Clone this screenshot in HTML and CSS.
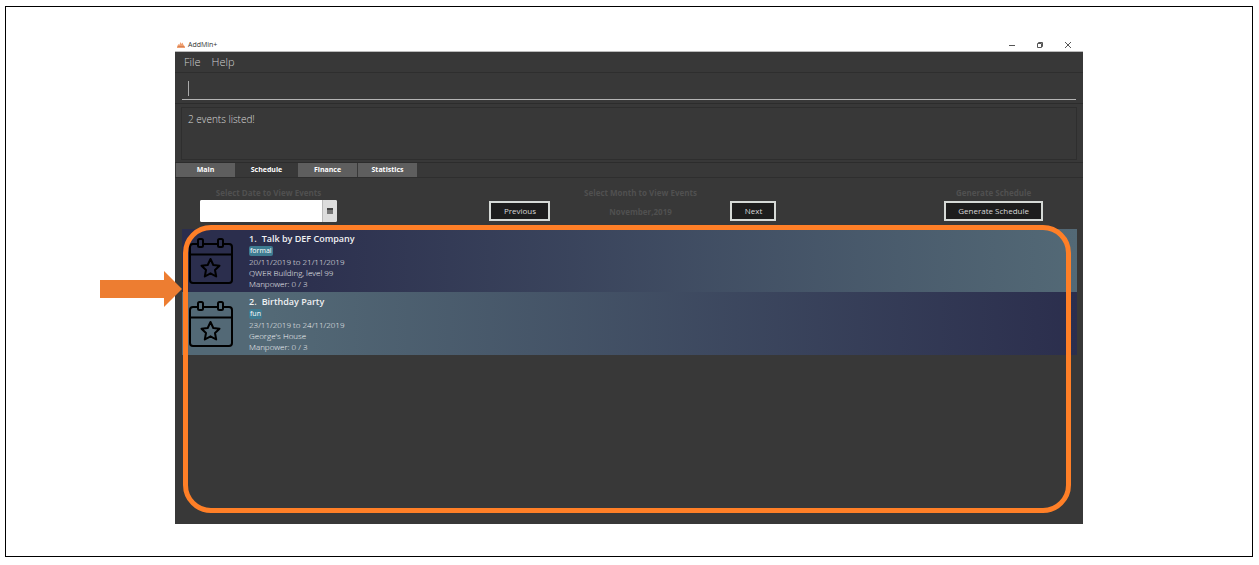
FILE: index.html
```html
<!DOCTYPE html>
<html lang="en">
<head>
<meta charset="utf-8">
<title>AddMin+</title>
<link rel="stylesheet" href="styles.css">
</head>
<body>
<svg class="defs" aria-hidden="true">
  <symbol id="event-icon" viewBox="0 0 44 48">
    <g fill="none" stroke="#000" stroke-width="2" stroke-linejoin="round" stroke-linecap="round">
      <path d="M8 7H4Q1 7 1 10V43Q1 46 4 46H40Q43 46 43 43V10Q43 7 40 7H35M15 7H28M1 17.500H43"/>
      <rect x="9" y="2" width="5" height="8" rx="1.500"/>
      <rect x="29" y="2" width="5" height="8" rx="1.500"/>
      <path d="M21.500 22L24.300 28L30.500 28.700L26 33L27.200 39.500L21.500 36.300L15.800 39.500L17 33L12.500 28.700L18.700 28Z"/>
    </g>
  </symbol>
</svg>
<main class="page">
  <section class="window">
    <header class="titlebar">
      <svg class="logo" viewBox="0 0 8 6" aria-hidden="true"><path d="M0 4.500L1.500 2L2.300 3L3.500 0L4.500 2L5.500 0.500L6.500 3L8 4.500V6H0Z" fill="#f0a070"/><path d="M1 4.500H7" stroke="#c8744a" stroke-width=".7"/></svg>
      <span class="title">AddMin+</span>
      <button class="win-btn" aria-label="Minimize"><svg viewBox="0 0 8 8"><path d="M1 4.500H7"/></svg></button>
      <button class="win-btn" aria-label="Restore"><svg viewBox="0 0 8 8"><path d="M1.500 2.500H5.500V6.500H1.500ZM2.500 2.500V1.500H6.500V5.500H5.500"/></svg></button>
      <button class="win-btn" aria-label="Close"><svg viewBox="0 0 8 8"><path d="M1 1L7 7M7 1L1 7"/></svg></button>
    </header>
    <nav class="menu">
      <button class="menu-item">File</button>
      <button class="menu-item">Help</button>
    </nav>
    <div class="command">
      <input class="command-input" type="text" aria-label="Command">
      <span class="caret"></span>
    </div>
    <div class="result"><p class="result-box">2 events listed!</p></div>
    <nav class="tabs">
      <button class="tab">Main</button>
      <button class="tab tab-active">Schedule</button>
      <button class="tab">Finance</button>
      <button class="tab">Statistics</button>
    </nav>
    <div class="toolbar">
      <div class="group">
        <label class="caption" for="date">Select Date to View Events</label>
        <div class="picker">
          <input class="picker-input" id="date" type="text">
          <button class="picker-btn" aria-label="Open calendar"><svg viewBox="0 0 6 6"><path d="M0 0H6V6H0Z" fill="#777"/><path d="M0 0H6V2H0Z" fill="#444"/></svg></button>
        </div>
      </div>
      <div class="group months">
        <span class="caption month-caption">Select Month to View Events</span>
        <button class="btn">Previous</button>
        <span class="caption month">November,2019</span>
        <button class="btn">Next</button>
      </div>
      <div class="group">
        <span class="caption">Generate Schedule</span>
        <button class="btn">Generate Schedule</button>
      </div>
    </div>
    <div class="events">
      <article class="event event-odd">
        <svg class="event-icon" aria-hidden="true"><use href="#event-icon"/></svg>
        <div class="event-body">
          <h2 class="event-title"><span>1.</span><span>Talk by DEF Company</span></h2>
          <span class="tag">formal</span>
          <p class="line">20/11/2019 to 21/11/2019</p>
          <p class="line">QWER Building, level 99</p>
          <p class="line">Manpower: 0 / 3</p>
        </div>
      </article>
      <article class="event event-even">
        <svg class="event-icon" aria-hidden="true"><use href="#event-icon"/></svg>
        <div class="event-body">
          <h2 class="event-title"><span>2.</span><span>Birthday Party</span></h2>
          <span class="tag">fun</span>
          <p class="line">23/11/2019 to 24/11/2019</p>
          <p class="line">George's House</p>
          <p class="line">Manpower: 0 / 3</p>
        </div>
      </article>
      <div class="highlight"></div>
      <svg class="arrow" viewBox="0 0 82 36" aria-hidden="true"><path d="M0 9H64V0L82 18L64 36V27H0Z" fill="#ed7d31"/></svg>
    </div>
  </section>
</main>
</body>
</html>
```
FILE: styles.css
```css
* { box-sizing: border-box; }
body {
  margin: 0;
  min-height: 100vh;
  display: flex;
  padding: 6px 6px 8px 5px;
  background: #fff;
  font-family: "Open Sans", "Noto Sans", sans-serif;
}
button, input { font: inherit; border: 0; padding: 0; margin: 0; border-radius: 0; outline: 0; }
button { background: none; }
h2, p { margin: 0; }
.defs { position: absolute; width: 0; height: 0; }
.page {
  flex: 1;
  display: flex;
  border: 1px solid #000;
  padding: 31px 169px 32px;
}
.window {
  flex: 1;
  min-width: 0;
  display: flex;
  flex-direction: column;
  background: #383838;
}
.titlebar {
  display: flex;
  align-items: center;
  height: 14px;
  padding: 0 1px 0 2px;
  background: #fff;
  border-bottom: 1px solid #bbb;
}
.logo { width: 8px; height: 6px; }
.title { flex: 1; padding-left: 3px; font-size: 7px; line-height: 12px; color: #333; }
.win-btn { width: 28px; height: 12px; display: flex; align-items: center; justify-content: center; }
.win-btn svg { width: 8px; height: 8px; fill: none; stroke: #555; stroke-width: 1; }
.menu {
  display: flex;
  gap: 11px;
  height: 21px;
  padding: 0 9px;
  border-bottom: 1px solid #2e2e2e;
}
.menu-item { color: #d0d0d0; font-size: 11px; line-height: 20px; font-weight: 300; }
.command {
  position: relative;
  height: 31px;
  padding: 2px 7px 3px;
  border-bottom: 1px solid #2c2c2c;
}
.command-input {
  width: 100%;
  height: 25px;
  padding: 0 6px;
  color: #ddd;
  background: transparent;
  border-bottom: 1px solid #b4b4b4;
}
.caret { position: absolute; left: 13px; top: 8px; width: 1px; height: 15px; background: #aaa; }
.result { padding: 3px 6px 2px; border-bottom: 1px solid #2c2c2c; }
.result-box {
  height: 53px;
  padding: 4px 6px;
  border: 1px solid #2e2e2e;
  color: #d8d8d8;
  font-size: 10px;
  line-height: 15px;
  font-weight: 300;
}
.tabs { display: flex; padding-left: 1px; height: 15px; border-bottom: 1px solid #2e2e2e; }
.tab { width: 60px; border-right: 1px solid #383838; background: #5e5e5e; color: #fff; font-size: 7px; line-height: 14px; font-weight: 700; }
.tab-active { width: 62px; background: #383838; }
.toolbar {
  display: grid;
  grid-template-columns: auto 10fr auto 11fr auto;
  padding: 7px 40px 7px 25px;
}
.group { display: grid; grid-template-rows: 15px 22px; }
.group:nth-child(2) { grid-column: 3; }
.group:nth-child(3) { grid-column: 5; }
.months { grid-template-columns: 61px 180px 46px; }
.month-caption { grid-column: 1 / -1; padding-left: 15px; }
.caption { color: #505050; font-size: 8px; line-height: 15px; font-weight: 700; text-align: center; }
.month { align-self: center; }
.btn {
  height: 20px;
  margin-top: 1px;
  padding: 0 12px;
  background: #1d1d1d;
  border: 2px solid #d5d9d6;
  color: #d8d8d8;
  font-size: 8px;
  line-height: 16px;
}
.months .btn { padding: 0; }
.picker { display: flex; width: 137px; border-radius: 2px; background: #fff; overflow: hidden; }
.picker-input { flex: 1; min-width: 0; padding: 0 4px; background: #fff; font-size: 8px; }
.picker-btn { width: 15px; display: flex; align-items: center; justify-content: center; background: #ddd; border-left: 1px solid #bbb; }
.picker-btn svg { width: 6px; height: 6px; }
.events { position: relative; flex: 1; padding: 0 6px 0 7px; }
.event { display: flex; gap: 16px; height: 63px; padding: 3px 7px; color: #f4f5f6; }
.event-odd { background: linear-gradient(90deg, #2b2e4d 10%, #536976); }
.event-even { background: linear-gradient(90deg, #536976 10%, #2b2e4d); }
.event-icon { width: 44px; height: 48px; margin-top: 5px; }
.event-title { display: flex; gap: 5px; font-size: 9px; line-height: 13px; font-weight: 600; color: #f0f1f3; }
.tag { display: block; width: max-content; margin-top: 1px; padding: 0 1px; background: #3e7b91; border-radius: 2px; color: #fff; font-size: 7px; line-height: 10px; }
.line { font-size: 8px; line-height: 11px; font-weight: 300; }
.highlight {
  position: absolute;
  inset: -4px 12px 11px 8px;
  border: 5px solid #ff7f27;
  border-radius: 28px;
}
.arrow { position: absolute; left: -75px; top: 42px; width: 82px; height: 36px; }
```
